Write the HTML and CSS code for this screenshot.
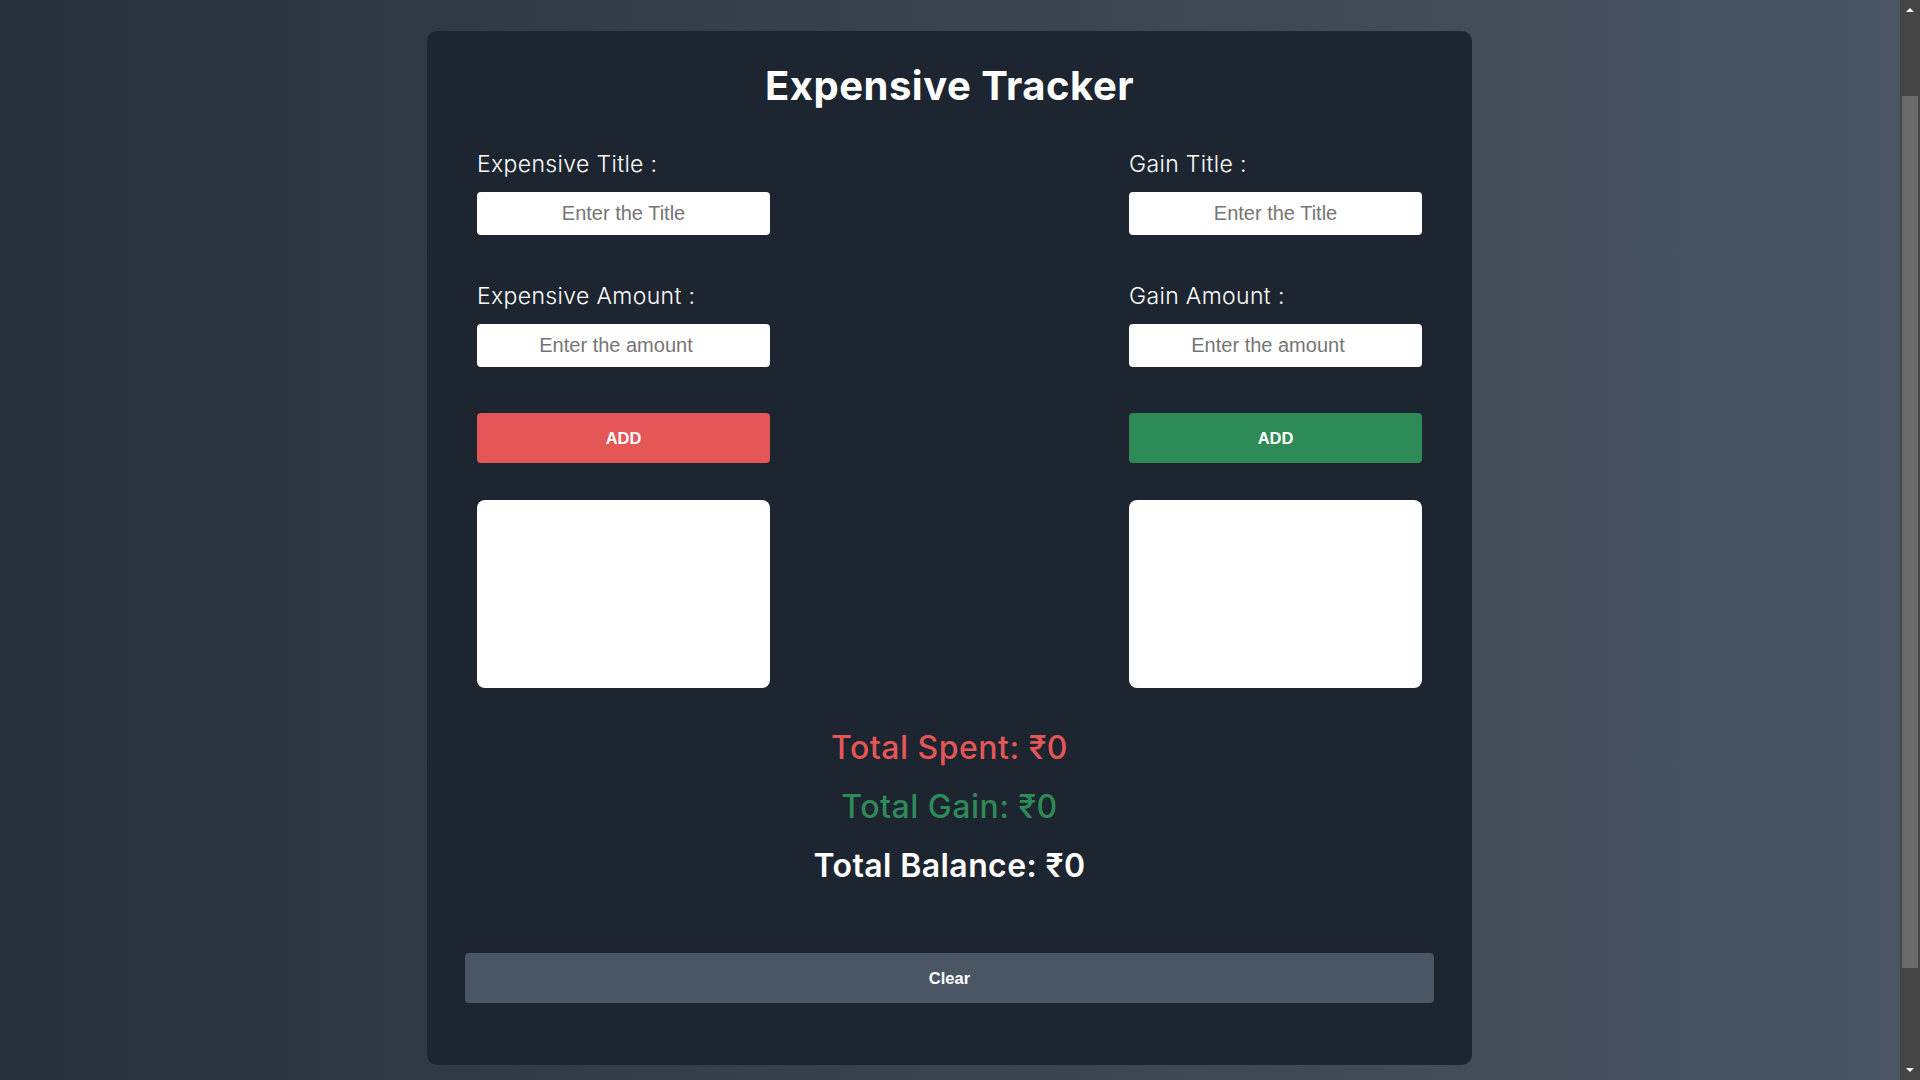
FILE: index.html
```html
<!DOCTYPE html>
<html lang="en">
<head>
<meta charset="UTF-8">
<title>Expensive Tracker</title>
<link rel="stylesheet" href="styles.css">
</head>
<body>
<div class="page">
  <main class="card">
    <h1 class="title">Expensive Tracker</h1>
    <div class="columns">
      <section class="col">
        <div class="field">
          <label class="label" for="exp-title">Expensive Title :</label>
          <input class="input" id="exp-title" type="text" placeholder="Enter the Title">
        </div>
        <div class="field">
          <label class="label" for="exp-amount">Expensive Amount :</label>
          <input class="input" id="exp-amount" type="number" placeholder="Enter the amount">
        </div>
        <button class="btn btn-red">ADD</button>
        <ul class="list"></ul>
      </section>
      <section class="col">
        <div class="field">
          <label class="label" for="gain-title">Gain Title :</label>
          <input class="input" id="gain-title" type="text" placeholder="Enter the Title">
        </div>
        <div class="field">
          <label class="label" for="gain-amount">Gain Amount :</label>
          <input class="input" id="gain-amount" type="number" placeholder="Enter the amount">
        </div>
        <button class="btn btn-green">ADD</button>
        <ul class="list"></ul>
      </section>
    </div>
    <div class="totals">
      <p class="total total-spent">Total Spent: ₹0</p>
      <p class="total total-gain">Total Gain: ₹0</p>
      <p class="total total-balance">Total Balance: ₹0</p>
    </div>
    <button class="btn btn-clear">Clear</button>
  </main>
</div>
<div class="scrollbar" aria-hidden="true">
  <span class="sb-arrow sb-up"></span>
  <span class="sb-thumb"></span>
  <span class="sb-arrow sb-down"></span>
</div>
</body>
</html>
```
FILE: styles.css
```css
* { box-sizing: border-box; }

html, body {
  margin: 0;
  padding: 0;
}

body {
  background: linear-gradient(to right, #28303b, #4b5664);
  font-family: Inter, "Noto Sans", sans-serif;
  color: #ffffff;
  overflow: hidden;
}

.page {
  width: calc(100% - 21px);
  min-height: 1080px;
  padding-top: 31px;
}

.card {
  width: 1045px;
  margin: 0 auto;
  background: #1d2530;
  border-radius: 10px;
  padding: 31px 38px 62px;
}

.title {
  margin: 0 0 39px;
  text-align: center;
  font-size: 40px;
  line-height: 48px;
  font-weight: 700;
  letter-spacing: 0.5px;
}

.columns {
  display: flex;
  justify-content: space-between;
  padding: 0 12px;
}

.col {
  width: 293px;
  display: flex;
  flex-direction: column;
}

.field + .field {
  margin-top: 46px;
}

.label {
  display: block;
  font-size: 23px;
  line-height: 30px;
  font-weight: 300;
  letter-spacing: 0.35px;
  margin-bottom: 13px;
}

.input {
  display: block;
  width: 100%;
  height: 43px;
  border: none;
  border-radius: 4px;
  background: #ffffff;
  text-align: center;
  font-family: "Liberation Sans", Arial, sans-serif;
  font-size: 20px;
  padding: 0 8px;
  outline: none;
}

.input::placeholder {
  color: #757575;
}

.btn {
  display: block;
  width: 100%;
  height: 50px;
  border: none;
  border-radius: 4px;
  color: #ffffff;
  font-family: "Liberation Sans", Arial, sans-serif;
  font-size: 16.5px;
  font-weight: 700;
  cursor: pointer;
}

.col .btn {
  margin-top: 46px;
}

.btn-red { background: #e55656; }
.btn-green { background: #2e8b57; }

.list {
  margin: 37px 0 0;
  padding: 0;
  list-style: none;
  height: 188px;
  background: #ffffff;
  border-radius: 8px;
}

.totals {
  margin-top: 30px;
  text-align: center;
}

.total {
  margin: 0;
  font-size: 32px;
  line-height: 59px;
  letter-spacing: 0.5px;
}

.total-spent { color: #e55656; font-weight: 500; }
.total-gain { color: #2e8b57; font-weight: 500; }
.total-balance { color: #ffffff; font-weight: 600; letter-spacing: 0.4px; }

.btn-clear {
  margin-top: 58px;
  background: #4a5664;
}

.scrollbar {
  position: fixed;
  top: 0;
  right: 0;
  width: 20px;
  height: 100%;
  background: #454545;
}

.sb-thumb {
  position: absolute;
  left: 2px;
  right: 2px;
  top: 96px;
  height: 872px;
  background: #6b6b6b;
}

.sb-arrow {
  position: absolute;
  left: 6px;
  width: 0;
  height: 0;
  border-left: 4px solid transparent;
  border-right: 4px solid transparent;
}

.sb-up {
  top: 8px;
  border-bottom: 4px solid #ffffff;
}

.sb-down {
  bottom: 8px;
  border-top: 4px solid #ffffff;
}
```
